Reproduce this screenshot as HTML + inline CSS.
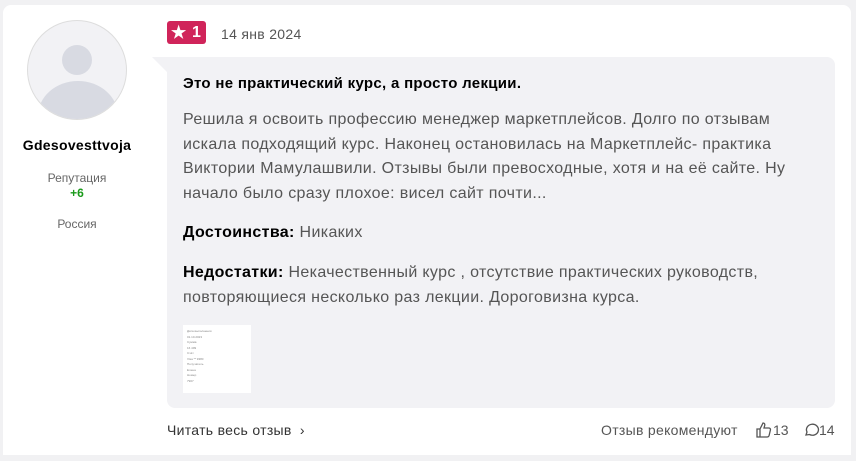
<!DOCTYPE html><html><head><meta charset="utf-8"><style>
body{margin:0;width:856px;height:461px;background:#f1f1f3;font-family:"Liberation Sans",sans-serif;position:relative;overflow:hidden}
.card{position:absolute;left:3px;top:5px;width:848px;height:450px;background:#fff;border-radius:8px 8px 0 0}
.abs{position:absolute}
.av{left:27px;top:20px;width:100px;height:100px;border-radius:50%;background:#f2f2f5;border:1px solid #ddd;overflow:hidden;box-sizing:border-box}
.bub{left:167px;top:57px;width:668px;height:351px;background:#f2f2f5;border-radius:0 8px 8px 8px}
.p{color:#555;font-size:16px;line-height:24.5px;letter-spacing:0.35px}
b{color:#000}
</style></head><body>
<div class="card"></div>
<div class="abs av"><div class="abs" style="left:34px;top:24px;width:30px;height:30px;border-radius:50%;background:#d8dae2"></div><div class="abs" style="left:10px;top:60px;width:80px;height:70px;border-radius:50%;background:#d8dae2"></div></div>
<div class="abs" style="left:0;width:154px;top:137px;text-align:center;font-weight:bold;font-size:14px;color:#000;letter-spacing:0.3px">Gdesovesttvoja</div>
<div class="abs" style="left:0;width:154px;top:171px;text-align:center;font-size:12px;color:#666">Репутация</div>
<div class="abs" style="left:0;width:154px;top:186px;text-align:center;font-size:12px;color:#1a9a1a;font-weight:bold">+6</div>
<div class="abs" style="left:0;width:154px;top:217px;text-align:center;font-size:12px;color:#666">Россия</div>
<div class="abs" style="left:167px;top:21px;width:39px;height:23px;background:#d0245a;border-radius:3px;color:#fff;font-weight:bold;font-size:16px;line-height:23px"><span style="position:absolute;left:4px;top:0;font-size:17px">★</span><span style="position:absolute;left:25px">1</span></div>
<div class="abs" style="left:221px;top:26px;font-size:14px;color:#555;letter-spacing:0.3px">14 янв 2024</div>
<svg class="abs" style="left:152px;top:57px" width="16" height="16"><path d="M0 0H16V16Z" fill="#f2f2f5"/></svg>
<div class="abs bub"></div>
<div class="abs" style="left:183px;top:75px;font-size:15px;font-weight:bold;color:#000;letter-spacing:0.3px">Это не практический курс, а просто лекции.</div>
<div class="abs p" style="left:183px;top:108px;width:625px">Решила я освоить профессию менеджер маркетплейсов. Долго по отзывам искала подходящий курс. Наконец остановилась на Маркетплейс- практика Виктории Мамулашвили. Отзывы были превосходные, хотя и на её сайте. Ну начало было сразу плохое: висел сайт почти...</div>
<div class="abs p" style="left:183px;top:221px"><b>Достоинства:</b> Никаких</div>
<div class="abs p" style="left:183px;top:261px;width:640px"><b>Недостатки:</b> Некачественный курс , отсутствие практических руководств, повторяющиеся несколько раз лекции. Дороговизна курса.</div>
<div class="abs" style="left:183px;top:325px;width:68px;height:68px;background:#fff;font-size:3px;color:#888;padding:4px;box-sizing:border-box;line-height:5.5px">Дата выполнения<br>01.10.2023<br>Сумма<br>16 499<br>Счёт<br>Visa ** 9380<br>Получатель<br>Елена<br>Номер<br>7907</div>
<div class="abs" style="left:167px;top:422px;font-size:14px;color:#333;letter-spacing:0.3px">Читать весь отзыв <span style="margin-left:4px">›</span></div>
<div class="abs" style="left:601px;top:422px;font-size:14px;color:#555;letter-spacing:0.3px">Отзыв рекомендуют</div>
<svg class="abs" style="left:755px;top:421px" width="18" height="18" fill="none" stroke="#555" stroke-width="1.3"><path d="M2 8h3v8H2zM5 8l3-6c1.5 0 2 1 1.7 2.5L9 7h5c1 0 1.7 1 1.4 2l-1.3 5.5c-.3 1-1 1.5-2 1.5H5"/></svg>
<div class="abs" style="left:773px;top:422px;font-size:14px;color:#555">13</div>
<svg class="abs" style="left:803px;top:421px" width="17" height="17" fill="none" stroke="#555" stroke-width="1.3"><path d="M3 14l1-3A6 5.5 0 1 1 6.5 13.5Z"/></svg>
<div class="abs" style="left:819px;top:422px;font-size:14px;color:#555">14</div>
</body></html>
